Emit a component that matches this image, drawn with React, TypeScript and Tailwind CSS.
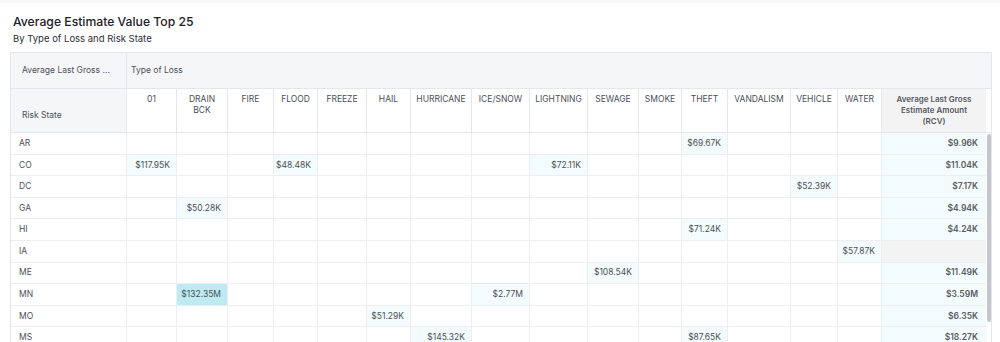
import React from 'react';

const types = [
	'01',
	'DRAIN BCK',
	'FIRE',
	'FLOOD',
	'FREEZE',
	'HAIL',
	'HURRICANE',
	'ICE/SNOW',
	'LIGHTNING',
	'SEWAGE',
	'SMOKE',
	'THEFT',
	'VANDALISM',
	'VEHICLE',
	'WATER'
];

type Row = {
	state: string;
	values: Record<string, string>;
	total: string | null;
	strong?: string;
};

const rows: Row[] = [
	{ state: 'AR', values: { THEFT: '$69.67K' }, total: '$9.96K' },
	{
		state: 'CO',
		values: { '01': '$117.95K', FLOOD: '$48.48K', LIGHTNING: '$72.11K' },
		total: '$11.04K'
	},
	{ state: 'DC', values: { VEHICLE: '$52.39K' }, total: '$7.17K' },
	{ state: 'GA', values: { 'DRAIN BCK': '$50.28K' }, total: '$4.94K' },
	{ state: 'HI', values: { THEFT: '$71.24K' }, total: '$4.24K' },
	{ state: 'IA', values: { WATER: '$57.87K' }, total: null },
	{ state: 'ME', values: { SEWAGE: '$108.54K' }, total: '$11.49K' },
	{
		state: 'MN',
		values: { 'DRAIN BCK': '$132.35M', 'ICE/SNOW': '$2.77M' },
		total: '$3.59M',
		strong: 'DRAIN BCK'
	},
	{ state: 'MO', values: { HAIL: '$51.29K' }, total: '$6.35K' },
	{
		state: 'MS',
		values: { HURRICANE: '$145.32K', THEFT: '$87.65K' },
		total: '$18.27K'
	},
	{ state: 'NC', values: { WATER: '$41.18K' }, total: '$5.02K' },
	{ state: 'NJ', values: { FLOOD: '$63.40K' }, total: '$8.71K' }
];

const cols =
	'grid grid-cols-[116px_50px_51px_46px_44px_49px_44px_61px_58px_58px_51px_43px_46px_63px_47px_44px_104px]';

function App() {
	return (
		<div
			className="w-[1000px] h-[342px] overflow-hidden bg-white text-[#4b5058]"
			style={{ fontFamily: 'Inter, "Noto Sans", sans-serif' }}
		>
			<div className="h-[3px] bg-[#f8f8f9]" />
			<div className="pl-[13px] pt-[11px]">
				<div className="text-[12.2px] leading-[16px] font-medium text-[#1d2127]">
					Average Estimate Value Top 25
				</div>
				<div className="text-[9.5px] leading-[13px] mt-[2px] text-[#2a2e34]">
					By Type of Loss and Risk State
				</div>
			</div>
			<div className="ml-[10px] mt-[7px] w-[982px] border-l border-t border-r border-[#e4e6e9]">
				<div className="grid grid-cols-[116px_1fr] h-[36px] bg-[#f5f6f8] border-b border-[#e4e6e9] text-[8.5px]">
					<div className="flex items-center pl-[11px] border-r border-[#e4e6e9]">
						Average Last Gross ...
					</div>
					<div className="flex items-center pl-[4px]">Type of Loss</div>
				</div>
				<div className="flex h-[44px] border-b border-[#e4e6e9] text-[8.5px]">
					<div className={cols}>
						<div className="bg-[#f5f6f8] border-r border-[#e4e6e9] pl-[11px] pt-[20px]">
							Risk State
						</div>
						{types.map((t) => (
							<div
								key={t}
								className="border-r border-[#e4e6e9] text-center pt-[5px] px-[4px] leading-[11px] uppercase"
							>
								{t === 'DRAIN BCK' ? (
									<>
										DRAIN
										<br />
										BCK
									</>
								) : (
									t
								)}
							</div>
						))}
						<div className="bg-[#f3f3f4] text-center font-semibold text-[8px] leading-[11px] pt-[5px] px-[12px] text-[#555a62]">
							Average Last Gross Estimate Amount (RCV)
						</div>
					</div>
					<div className="w-[6px] bg-white" />
				</div>
				<div className="flex h-[230px] overflow-hidden">
					<div className={`${cols} content-start`}>
						{rows.map((row) => (
							<React.Fragment key={row.state}>
								<div className="h-[21.6px] flex items-center pl-[8px] border-r border-b border-[#eceef0] text-[8.5px]">
									{row.state}
								</div>
								{types.map((t) => {
									const v = row.values[t];
									return (
										<div
											key={t}
											className={`h-[21.6px] flex items-center justify-end pr-[6px] border-r border-b border-[#eceef0] text-[8.5px] ${
												v
													? row.strong === t
														? 'bg-[#bdebf1]'
														: 'bg-[#f4fbfc]'
													: ''
											}`}
										>
											{v}
										</div>
									);
								})}
								<div
									className={`h-[21.6px] flex items-center justify-end pr-[8px] border-b border-[#eceef0] text-[8.5px] font-semibold text-[#585d65] ${
										row.total ? 'bg-[#f4fbfc]' : 'bg-[#f3f3f3]'
									}`}
								>
									{row.total}
								</div>
							</React.Fragment>
						))}
					</div>
					<div className="w-[6px] pl-[1px] pr-[1px] pt-[1px]">
						<div className="h-[188px] w-[4px] rounded-full bg-[#c3c6cc]" />
					</div>
				</div>
			</div>
		</div>
	);
}

export default App;
